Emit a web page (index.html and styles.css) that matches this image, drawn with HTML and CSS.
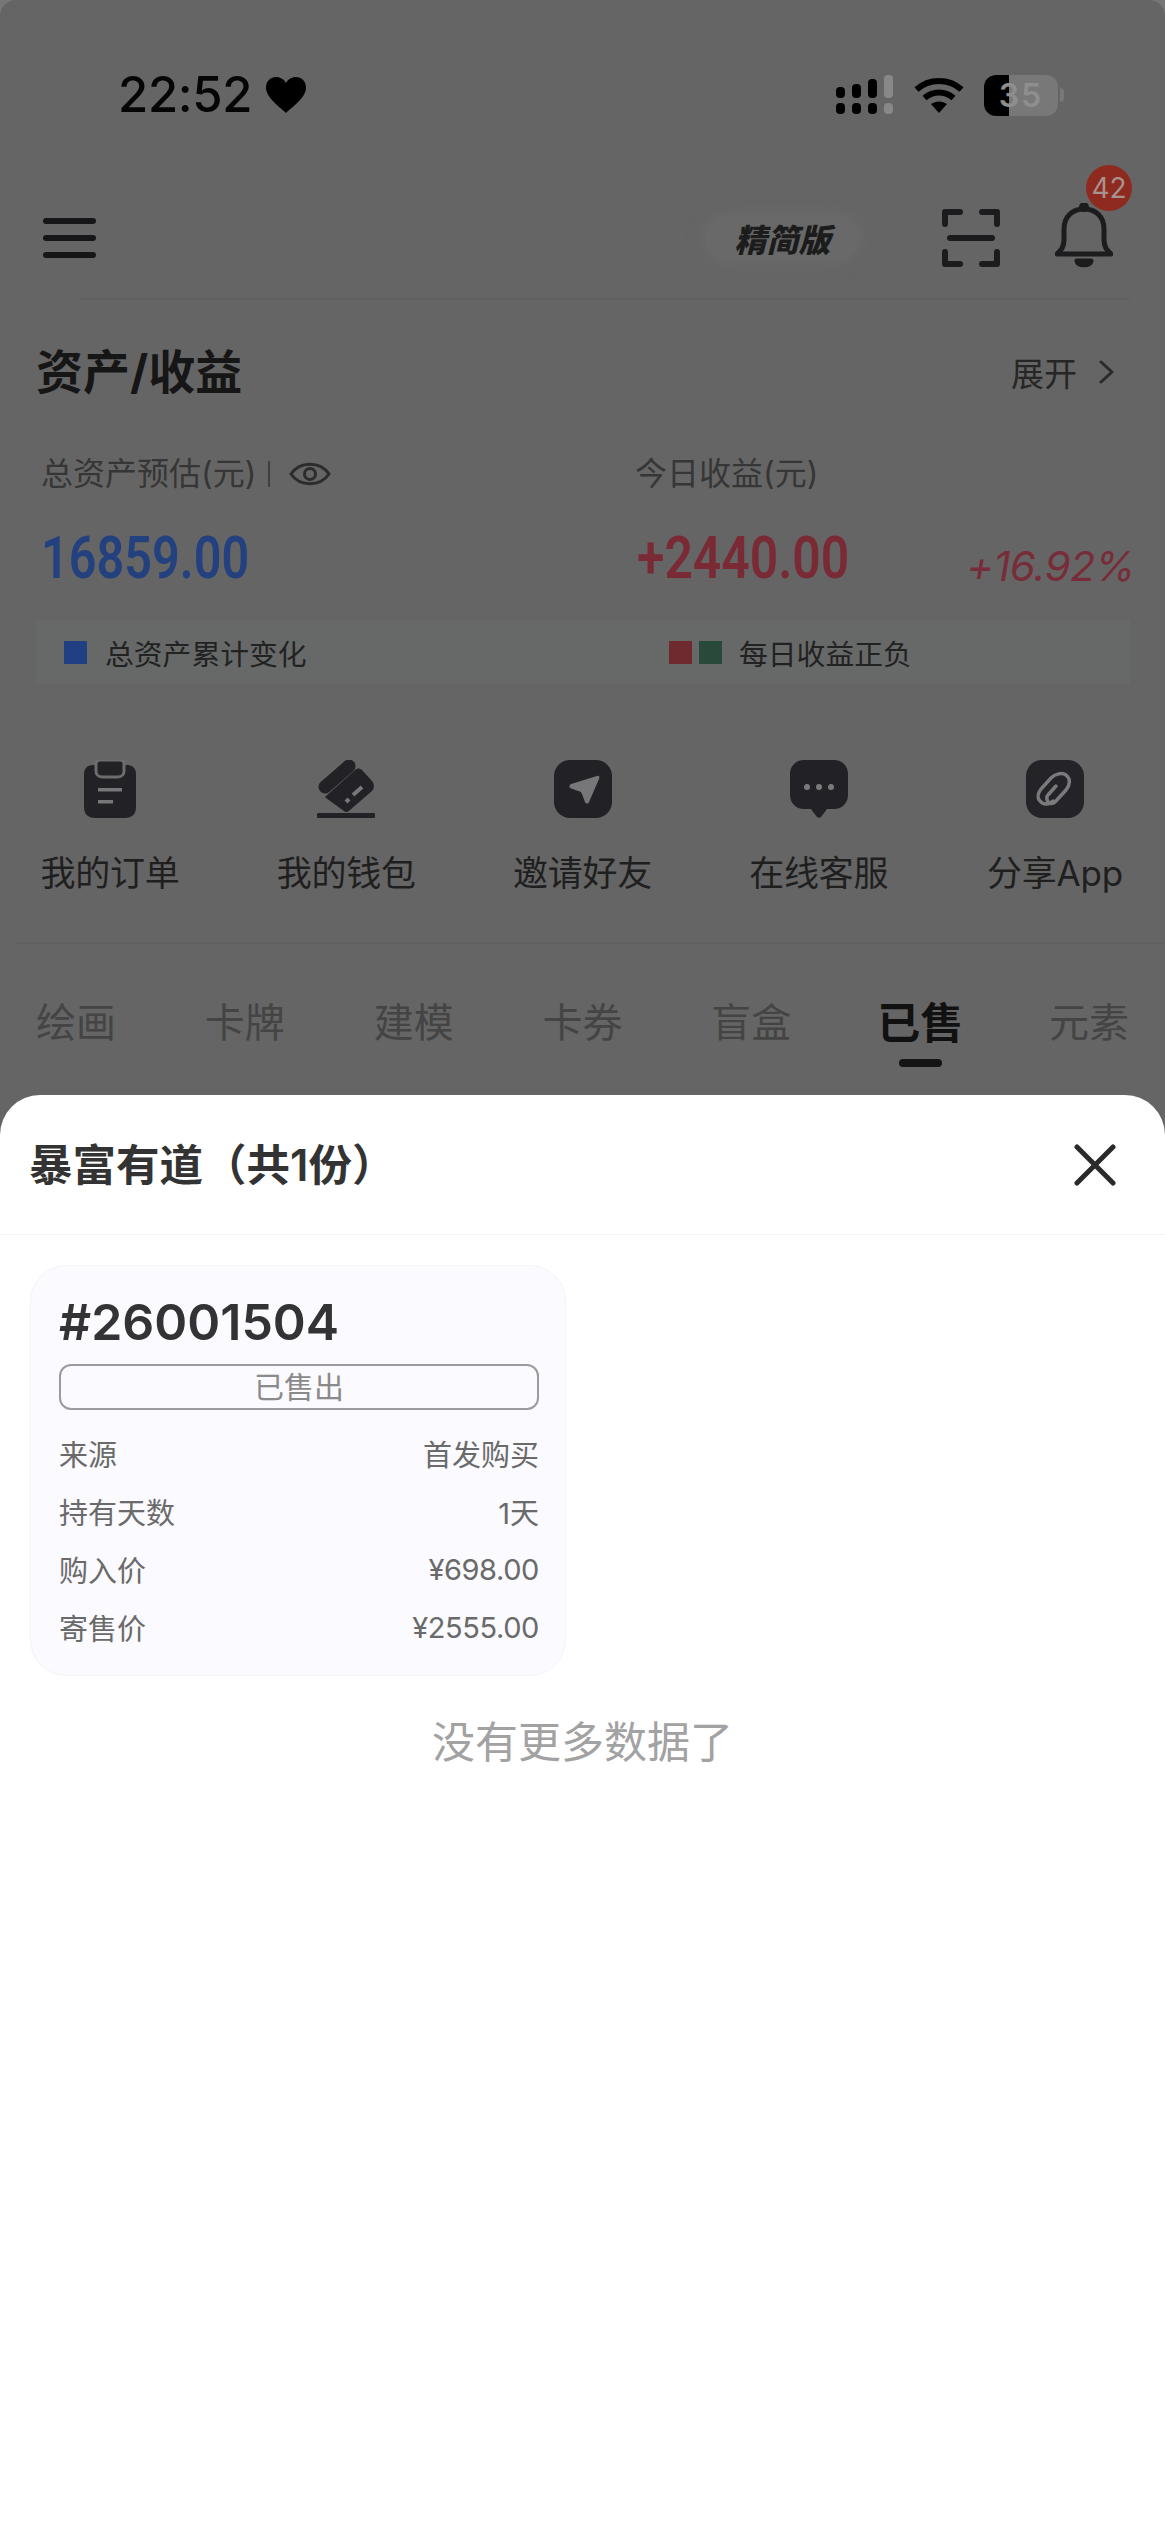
FILE: index.html
```html
<!DOCTYPE html>
<html lang="zh-CN">
<head>
<meta charset="utf-8">
<title>资产/收益</title>
<link rel="stylesheet" href="styles.css">
</head>
<body>
<div class="screen">
  <div class="underlay">
    <div class="status">
      <div class="status-left">
        <span class="time">22:52</span>
        <svg class="heart" viewBox="0 0 40 36"><path d="M20 36C17 32 0 22 0 10.500C0 4 5 0 10 0c4.500 0 8 2.500 10 6 2-3.500 5.500-6 10-6 5 0 10 4 10 10.500C40 22 23 32 20 36z"/></svg>
      </div>
      <div class="status-right">
        <svg class="signal" viewBox="0 0 58 40">
          <rect x="0" y="12" width="9" height="11" rx="4"/><rect x="16" y="9" width="9" height="14" rx="4"/><rect x="32" y="4" width="9" height="19" rx="4"/><rect class="signal-off" x="48" y="0" width="9" height="23" rx="4"/>
          <rect x="0" y="28" width="9" height="11" rx="4"/><rect x="16" y="28" width="9" height="11" rx="4"/><rect x="32" y="28" width="9" height="11" rx="4"/><rect class="signal-off" x="48" y="28" width="9" height="11" rx="4"/>
        </svg>
        <svg class="wifi" viewBox="0 0 50 36" fill="none"><path d="M2.500 12.500C15 1 35 1 47.500 12.500" stroke="#000" stroke-width="6"/><path d="M10.500 21C19 13.500 31 13.500 39.500 21" stroke="#000" stroke-width="6"/><path d="M17 27c5-3.500 11-3.500 16 0L25 36z" fill="#000"/></svg>
        <div class="battery">
          <div class="battery-cell"><span class="battery-fill"></span><span class="battery-num">35</span></div>
          <span class="battery-nub"></span>
        </div>
      </div>
    </div>

    <div class="topbar">
      <div class="burger"><span></span><span></span><span></span></div>
      <div class="pill">精简版</div>
      <svg class="scan" viewBox="0 0 58 58" fill="none" stroke="#1c1c1e" stroke-width="6" stroke-linecap="round" stroke-linejoin="round"><path d="M3 15V3h15M40 3h15v12M3 43v12h15M40 55h15V43M8 29h42"/></svg>
      <div class="bell-wrap">
        <svg class="bell" viewBox="0 0 58 65" fill="none" stroke="#1c1c1e" stroke-width="5" stroke-linecap="round" stroke-linejoin="round"><path d="M2 51h54c-5-4-7-8-7-14V26C49 14 41 6 29 6S9 14 9 26v11c0 6-2 10-7 14z"/><circle cx="29" cy="4" r="2.500" fill="#1c1c1e"/><path d="M22 58h14c-1 5-13 5-14 0z" fill="#1c1c1e"/></svg>
        <span class="badge">42</span>
      </div>
    </div>
    <div class="rule rule-top"></div>

    <div class="title-row">
      <h1 class="section-title">资产/收益</h1>
      <div class="expand">展开<svg class="chevron" viewBox="0 0 16 24" fill="none" stroke="#2a2a2a" stroke-width="3" stroke-linecap="round" stroke-linejoin="round"><path d="M2 2l11 10L2 22"/></svg></div>
    </div>

    <div class="stats">
      <div class="stat-label">总资产预估(元)<span class="stat-bar"></span><svg class="eye" viewBox="0 0 42 28" fill="none" stroke="#2c2c2c" stroke-width="3"><path d="M2 14C11 1 31 1 40 14 31 27 11 27 2 14z"/><circle cx="21" cy="14" r="5.500"/></svg></div>
      <div class="stat-label">今日收益(元)</div>
      <div class="stat-num stat-blue">16859.00</div>
      <div class="stat-pair">
        <div class="stat-num stat-red">+2440.00</div>
        <div class="stat-pct">+16.92%</div>
      </div>
    </div>

    <div class="legend">
      <div class="legend-item"><span class="swatch sw-blue"></span><span class="legend-text">总资产累计变化</span></div>
      <div class="legend-item"><span class="swatch sw-red"></span><span class="swatch sw-green"></span><span class="legend-text legend-text-wide">每日收益正负</span></div>
    </div>

    <div class="actions">
      <div class="action">
        <svg class="action-icon" viewBox="0 0 58 58"><path d="M12 5h34c6 0 9 4 9 9v33c0 7-4 11-11 11H14C7 58 3 54 3 47V14c0-5 3-9 9-9z" fill="#222226"/><path d="M15 3c0-2 2-3 4-3h20c2 0 4 1 4 3v8c0 3-2 6-6 6H21c-4 0-6-3-6-6z" fill="#222226" stroke="#6d6d6d" stroke-width="3"/><rect x="17" y="28" width="24" height="3.500" fill="#77777a"/><rect x="17" y="40" width="15" height="3.500" fill="#77777a"/></svg>
        <div class="action-label">我的订单</div>
      </div>
      <div class="action">
        <svg class="action-icon" viewBox="0 0 58 58"><path d="M8 27L32 6" stroke="#222226" stroke-width="13" stroke-linecap="round"/><path d="M9 36L38 10c2-2 5-2 7 0l10 11c2 2 3 7 0 10L33 50c-2 2-4 3-6 1L9 38c-1-1-1-1 0-2z" fill="#222226"/><path d="M45 27l-9 8" stroke="#77777a" stroke-width="4"/><path d="M29 42l3-3" stroke="#77777a" stroke-width="4"/><rect x="0" y="53" width="58" height="5" rx="1" fill="#222226"/></svg>
        <div class="action-label">我的钱包</div>
      </div>
      <div class="action">
        <svg class="action-icon" viewBox="0 0 58 58"><rect width="58" height="58" rx="16" fill="#222226"/><path d="M16 28c-1-1-1-3 1-4l26-8c2-1 3 1 2 3l-10 23c-1 2-3 2-4 0l-3-8c-1-2-2-3-4-3z" fill="#77777a"/></svg>
        <div class="action-label">邀请好友</div>
      </div>
      <div class="action">
        <svg class="action-icon" viewBox="0 0 58 58"><path d="M14 0h30c8 0 14 6 14 14v21c0 8-6 14-14 14h-7l-6 8c-1 1-3 1-4 0l-6-8h-7C6 49 0 43 0 35V14C0 6 6 0 14 0z" fill="#222226"/><circle cx="17" cy="27" r="3" fill="#7a7a7d"/><circle cx="29" cy="27" r="3" fill="#7a7a7d"/><circle cx="41" cy="27" r="3" fill="#7a7a7d"/></svg>
        <div class="action-label">在线客服</div>
      </div>
      <div class="action">
        <svg class="action-icon" viewBox="0 0 58 58"><rect width="58" height="58" rx="16" fill="#232328"/><path d="M27 41c-4 4-10 4-13 0-3-3-2-8 1-12l10-11c4-4 11-6 15-3 5 4 4 10 0 15L29 42c-2 2-6 2-7 0s-2-5 0-7l8-9" fill="none" stroke="#7a7a7d" stroke-width="3.500" stroke-linecap="round"/></svg>
        <div class="action-label">分享App</div>
      </div>
    </div>
    <div class="rule rule-mid"></div>

    <div class="tabs">
      <div class="tab">绘画</div>
      <div class="tab">卡牌</div>
      <div class="tab">建模</div>
      <div class="tab">卡券</div>
      <div class="tab">盲盒</div>
      <div class="tab tab-active">已售<span class="tab-bar"></span></div>
      <div class="tab">元素</div>
    </div>
  </div>

  <section class="sheet">
    <header class="sheet-head">
      <h2 class="sheet-title">暴富有道（共1份）</h2>
      <svg class="close" viewBox="0 0 42 42" fill="none" stroke="#2a2a2a" stroke-width="5" stroke-linecap="round"><path d="M3 3l36 36M39 3L3 39"/></svg>
    </header>
    <div class="sheet-body">
      <article class="card">
        <div class="card-id">#26001504</div>
        <div class="card-status">已售出</div>
        <div class="card-rows">
          <div class="row"><span>来源</span><span>首发购买</span></div>
          <div class="row"><span>持有天数</span><span>1天</span></div>
          <div class="row"><span>购入价</span><span class="row-num">¥698.00</span></div>
          <div class="row"><span>寄售价</span><span class="row-num">¥2555.00</span></div>
        </div>
      </article>
      <div class="no-more">没有更多数据了</div>
    </div>
  </section>
</div>
</body>
</html>
```

FILE: styles.css
```css
* { box-sizing: border-box; }
html, body { margin: 0; padding: 0; }
body {
  width: 1165px;
  height: 2532px;
  background: #767676;
  overflow: hidden;
  font-family: Inter, "Noto Sans CJK SC", "Noto Sans", sans-serif;
}
h1, h2 { margin: 0; font: inherit; }
svg { display: block; flex: none; }

.screen {
  height: 2532px;
  background: #656565;
  border-radius: 16px 16px 0 0;
  display: flex;
  flex-direction: column;
}
.underlay { height: 1095px; flex: none; overflow: hidden; }

/* status bar */
.status {
  height: 165px;
  padding: 66px 101px 0 118px;
  display: flex;
  justify-content: space-between;
  align-items: flex-start;
}
.status-left, .status-right { height: 58px; display: flex; align-items: center; }
.time { font-size: 49px; font-weight: 500; line-height: 58px; color: #050505; letter-spacing: -0.3px; }
.heart { width: 40px; height: 36px; margin-left: 14px; fill: #000; }
.signal { width: 58px; height: 40px; fill: #000; }
.signal-off { fill: #888; }
.wifi { width: 50px; height: 36px; margin-left: 20px; }
.battery { margin-left: 20px; display: flex; align-items: center; gap: 2px; }
.battery-cell {
  width: 74px; height: 41px;
  border-radius: 12px;
  background: #787878;
  overflow: hidden;
  display: flex;
  align-items: center;
  justify-content: center;
  position: relative;
}
.battery-fill { position: absolute; left: 0; top: 0; bottom: 0; width: 25px; background: #000; }
.battery-num { position: relative; font-size: 32px; font-weight: 600; color: #8e8e8e; letter-spacing: 2px; line-height: 41px; }
.battery-nub { width: 4px; height: 14px; border-radius: 0 4px 4px 0; background: #787878; }

/* top bar */
.topbar {
  height: 108px;
  padding: 38px 52px 0 43px;
  display: flex;
  align-items: center;
}
.burger { width: 53px; display: flex; flex-direction: column; gap: 11px; margin-right: auto; }
.burger span { display: block; height: 6px; border-radius: 3px; background: #161618; }
.pill {
  width: 155px; height: 46px;
  border-radius: 23px;
  background: #696969;
  box-shadow: 0 0 14px 4px #696969;
  display: flex; align-items: center; justify-content: center;
  font-size: 32px; font-weight: 900; font-style: italic;
  color: #1c1c1c;
  margin-right: 82px;
}
.scan { width: 58px; height: 58px; margin-right: 55px; }
.bell-wrap { position: relative; width: 58px; height: 65px; margin-top: -5px; }
.bell { width: 58px; height: 65px; }
.badge {
  position: absolute; left: 31px; top: -38px;
  width: 46px; height: 46px;
  border-radius: 50%;
  background: #8f2a20;
  color: #a8928e;
  font-size: 28px;
  line-height: 46px;
  text-align: center;
}
.rule { height: 2px; background: #606060; }
.rule-top { margin: 25px 35px 0 80px; }
.rule-mid { margin: 47px 0 0 15px; }

/* assets */
.title-row {
  height: 60px;
  margin-top: 42px;
  padding: 0 50px 0 36px;
  display: flex; justify-content: space-between; align-items: center;
}
.section-title { font-size: 47px; font-weight: 700; line-height: 60px; color: #161616; }
.expand { display: flex; align-items: center; gap: 22px; font-size: 33px; color: #262626; }
.chevron { width: 16px; height: 24px; }

.stats {
  margin-top: 52px;
  padding: 0 30px 0 41px;
  display: grid;
  grid-template-columns: 594px 1fr;
  grid-template-rows: 40px 70px;
  row-gap: 29px;
}
.stat-label { display: flex; align-items: center; font-size: 32px; line-height: 40px; color: #363636; }
.stat-bar { width: 2px; height: 26px; background: #3f3f3f; margin: 0 19px 0 12px; }
.eye { width: 42px; height: 28px; }
.stat-num {
  font-family: Roboto, sans-serif;
  font-size: 60px; font-weight: 600; line-height: 70px;
  transform-origin: left center;
}
.stat-blue { color: #23407f; transform: scaleX(0.81); }
.stat-red { color: #7a2a34; transform: scaleX(0.83); margin-left: 2px; }
.stat-pair { display: flex; justify-content: space-between; align-items: flex-start; }
.stat-pct { font-size: 41.500px; font-style: italic; line-height: 50px; margin-top: 18px; color: #782c3a; letter-spacing: -0.5px; }

.legend {
  height: 64px;
  margin: 27px 35px 0 36px;
  padding-left: 28px;
  background: #676969;
  display: grid;
  grid-template-columns: 605px 1fr;
  align-items: center;
}
.legend-item { display: flex; align-items: center; }
.swatch { width: 23px; height: 23px; margin-right: 7px; }
.sw-blue { background: #214084; }
.sw-red { background: #6e2a2e; }
.sw-green { background: #294a3a; }
.legend-text { margin-left: 11px; font-size: 28.800px; color: #222; }
.legend-text-wide { margin-left: 10px; }

/* actions */
.actions {
  margin-top: 76px;
  padding: 0 15px;
  display: flex; justify-content: space-between;
}
.action { width: 190px; display: flex; flex-direction: column; align-items: center; }
.action-icon { width: 58px; height: 58px; }
.action-label { margin-top: 33px; font-size: 35px; line-height: 44px; color: #1f1f1f; white-space: nowrap; letter-spacing: -0.2px; }

/* tabs */
.tabs {
  margin-top: 49px;
  padding: 0 36px;
  display: flex; justify-content: space-between; align-items: flex-start;
}
.tab { font-size: 40px; line-height: 60px; color: #444; display: flex; flex-direction: column; align-items: center; }
.tab-active { font-size: 43px; font-weight: 700; color: #111; margin: 0 -3px; }
.tab-bar { width: 43px; height: 8px; margin-top: 6px; border-radius: 4px; background: #151515; }

/* sheet */
.sheet {
  flex: 1;
  background: #fff;
  border-radius: 40px 40px 0 0;
}
.sheet-head {
  height: 140px;
  padding: 0 49px 0 29px;
  border-bottom: 1px solid #f3f3f3;
  display: flex; justify-content: space-between; align-items: center;
}
.sheet-title { font-size: 43.500px; font-weight: 600; color: #333; line-height: 60px; }
.close { width: 42px; height: 42px; }
.sheet-body { padding: 30px 0 0; }
.card {
  width: 536px;
  height: 411px;
  margin-left: 30px;
  padding: 26px 26px 0 28px;
  background: #fafaff;
  border: 1px solid #f4f4f7;
  border-radius: 36px;
}
.card-id { font-size: 50px; font-weight: 600; line-height: 60px; color: #333336; }
.card-status {
  height: 46px;
  margin-top: 12px;
  border: 2px solid #9a9aa0;
  border-radius: 12px;
  font-size: 30px; line-height: 42px;
  color: #8a8a8a;
  text-align: center;
}
.card-rows { margin-top: 14px; }
.row {
  height: 58px;
  display: flex; justify-content: space-between; align-items: center;
  font-size: 29px; color: #6a6a6a;
}
.row-num { letter-spacing: -0.4px; }
.no-more {
  margin-top: 36px;
  font-size: 43px; line-height: 60px;
  color: #a2a2a2;
  text-align: center;
}
```
